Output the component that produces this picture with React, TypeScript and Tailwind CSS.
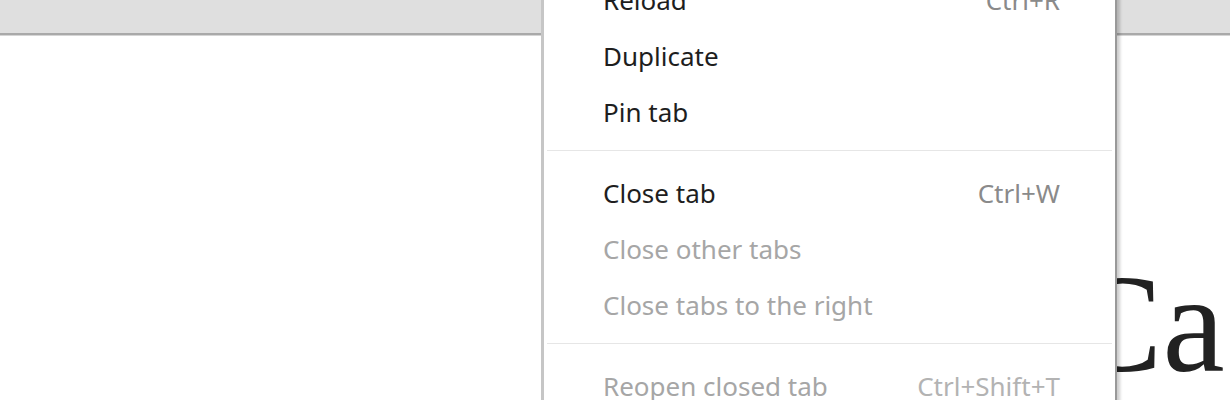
import React from "react"

type Item = { label: string; shortcut?: string; disabled?: boolean } | "sep"

const items: Item[] = [
  { label: "Reload", shortcut: "Ctrl+R" },
  { label: "Duplicate" },
  { label: "Pin tab" },
  "sep",
  { label: "Close tab", shortcut: "Ctrl+W" },
  { label: "Close other tabs", disabled: true },
  { label: "Close tabs to the right", disabled: true },
  "sep",
  { label: "Reopen closed tab", shortcut: "Ctrl+Shift+T", disabled: true },
]

export default function App() {
  return (
    <div className="relative w-[1230px] h-[400px] overflow-hidden bg-white">
      {/* tab strip */}
      <div className="h-[35px] bg-[#dfdfdf] border-b-2 border-[#a9a9a9]" />
      <div className="h-px bg-[#d5d5d5]" />

      {/* page content */}
      <div
        className="mt-[218px] pl-[1069px] text-[140px] leading-none text-[#222] whitespace-nowrap"
        style={{ fontFamily: '"Liberation Serif", serif' }}
      >
        Ca
      </div>

      {/* context menu */}
      <div
        className="absolute left-[541px] top-[-28px] w-[576px] bg-white border-l-[3px] border-[#c6c6c6] border-r-2 border-r-[#999] shadow-[3px_0_3px_rgba(0,0,0,0.2)]"
        style={{ fontFamily: '"Noto Sans", "Open Sans", sans-serif' }}
      >
        {items.map((item, i) =>
          item === "sep" ? (
            <div key={i} className="pt-[10px] pb-[14px] px-[3px]">
              <div className="h-px bg-[#e6e6e6]" />
            </div>
          ) : (
            <div
              key={i}
              className="h-[56px] flex items-center justify-between pl-[59px] pr-[55px] text-[26px]"
            >
              <span className={item.disabled ? "text-[#a6a6a6]" : "text-[#1e1e1e]"}>{item.label}</span>
              {item.shortcut && (
                <span className={item.disabled ? "text-[#b3b3b3]" : "text-[#8a8a8a]"}>{item.shortcut}</span>
              )}
            </div>
          )
        )}
      </div>
    </div>
  )
}
